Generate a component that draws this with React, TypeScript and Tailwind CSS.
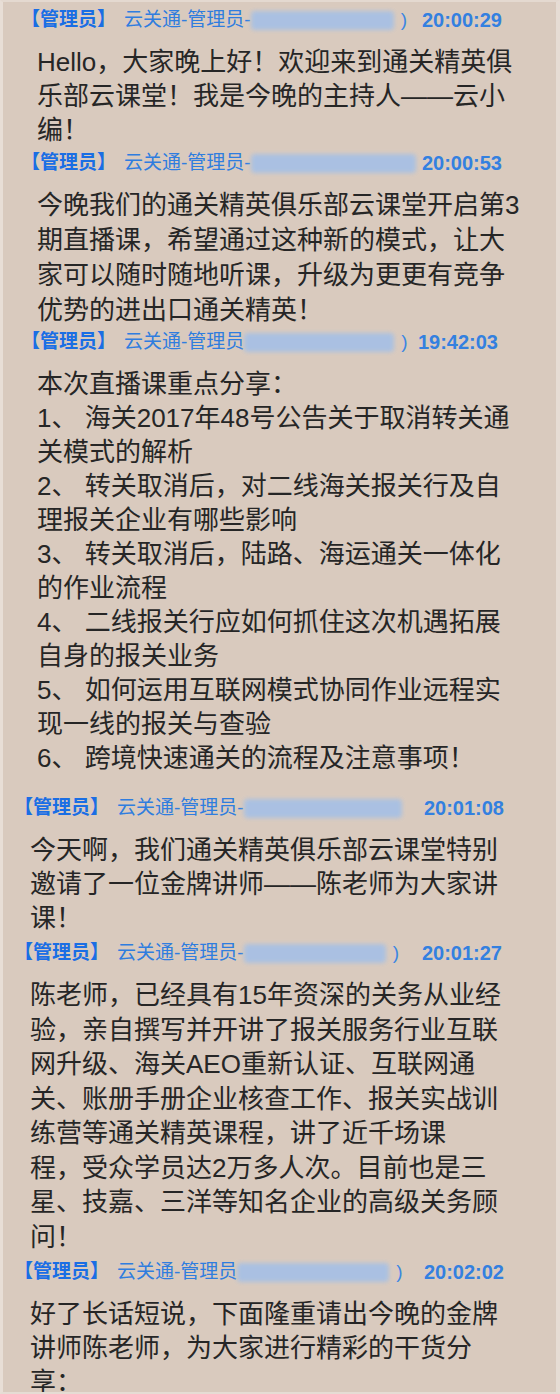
import type { ReactNode } from 'react'

type Msg = {
  name: string
  blur: number
  paren: boolean
  time: string
  lines: string[]
  indent: 'wide' | 'narrow'
  gapTop: string
  leading: string
  timeEnd: string
}

const messages: Msg[] = [
  {
    name: '云关通-管理员-',
    blur: 143,
    paren: true,
    time: '20:00:29',
    indent: 'wide',
    gapTop: 'mt-0',
    leading: 'leading-[34px]',
    timeEnd: 'pr-[54px]',
    lines: ['Hello，大家晚上好！欢迎来到通关精英俱', '乐部云课堂！我是今晚的主持人——云小', '编！'],
  },
  {
    name: '云关通-管理员-',
    blur: 165,
    paren: false,
    time: '20:00:53',
    indent: 'wide',
    gapTop: 'mt-[2px]',
    leading: 'leading-[35px]',
    timeEnd: 'pr-[54px]',
    lines: [
      '今晚我们的通关精英俱乐部云课堂开启第3',
      '期直播课，希望通过这种新的模式，让大',
      '家可以随时随地听课，升级为更更有竞争',
      '优势的进出口通关精英！',
    ],
  },
  {
    name: '云关通-管理员',
    blur: 150,
    paren: true,
    time: '19:42:03',
    indent: 'wide',
    gapTop: 'mt-0',
    leading: 'leading-[34px]',
    timeEnd: 'pr-[58px]',
    lines: [
      '本次直播课重点分享：',
      '1、 海关2017年48号公告关于取消转关通',
      '关模式的解析',
      '2、 转关取消后，对二线海关报关行及自',
      '理报关企业有哪些影响',
      '3、 转关取消后，陆路、海运通关一体化',
      '的作业流程',
      '4、 二线报关行应如何抓住这次机遇拓展',
      '自身的报关业务',
      '5、 如何运用互联网模式协同作业远程实',
      '现一线的报关与查验',
      '6、 跨境快速通关的流程及注意事项！',
    ],
  },
  {
    name: '云关通-管理员-',
    blur: 158,
    paren: false,
    time: '20:01:08',
    indent: 'narrow',
    gapTop: 'mt-[19px]',
    leading: 'leading-[34px]',
    timeEnd: 'pr-[52px]',
    lines: ['今天啊，我们通关精英俱乐部云课堂特别', '邀请了一位金牌讲师——陈老师为大家讲', '课！'],
  },
  {
    name: '云关通-管理员-',
    blur: 142,
    paren: true,
    time: '20:01:27',
    indent: 'narrow',
    gapTop: 'mt-[4px]',
    leading: 'leading-[34.5px]',
    timeEnd: 'pr-[54px]',
    lines: [
      '陈老师，已经具有15年资深的关务从业经',
      '验，亲自撰写并开讲了报关服务行业互联',
      '网升级、海关AEO重新认证、互联网通',
      '关、账册手册企业核查工作、报关实战训',
      '练营等通关精英课程，讲了近千场课',
      '程，受众学员达2万多人次。目前也是三',
      '星、技嘉、三洋等知名企业的高级关务顾',
      '问！',
    ],
  },
  {
    name: '云关通-管理员',
    blur: 152,
    paren: true,
    time: '20:02:02',
    indent: 'narrow',
    gapTop: 'mt-[4px]',
    leading: 'leading-[34px]',
    timeEnd: 'pr-[52px]',
    lines: ['好了长话短说，下面隆重请出今晚的金牌', '讲师陈老师，为大家进行精彩的干货分', '享：'],
  },
]

function Header({ msg }: { msg: Msg }) {
  return (
    <div
      className={`flex h-[28px] items-center whitespace-nowrap text-[19px] leading-[28px] ${
        msg.indent === 'wide' ? 'pl-[18px]' : 'pl-[11px]'
      } ${msg.timeEnd}`}
    >
      <span className="font-bold text-[#1a6ee4]">【管理员】</span>
      <span className="ml-[8px] text-[#2f7ddf]">{msg.name}</span>
      <span
        className="inline-block h-[19px] rounded-sm bg-[#a5c0e6] opacity-90 blur-[2px]"
        style={{ width: msg.blur }}
      />
      {msg.paren && <span className="ml-[7px] text-[#3c86e2]">)</span>}
      <span className="flex-1" />
      <span className="text-[20px] font-bold text-[#3380e0] [font-family:'Liberation_Sans',sans-serif]">
        {msg.time}
      </span>
    </div>
  )
}

function Body({ msg }: { msg: Msg }): ReactNode {
  return (
    <div
      className={`mt-[11px] text-[26px] text-[#262626] ${msg.leading} ${
        msg.indent === 'wide' ? 'pl-[34px]' : 'pl-[27px]'
      }`}
    >
      {msg.lines.map((line, i) => (
        <div key={i} className="whitespace-pre">
          {line}
        </div>
      ))}
    </div>
  )
}

export default function App() {
  return (
    <div
      className="h-[1394px] w-[560px] overflow-hidden border-l-[3px] border-t-[2px] border-r-[4px] border-b-[2px] border-l-[#e8ded6] border-t-[#e4d9d0] border-r-[#e6dcd4] border-b-[#e6dcd4] bg-[#d9cabe] pt-[4px]"
      style={{ fontFamily: "'Liberation Sans', 'Noto Sans CJK SC', sans-serif" }}
    >
      {messages.map((msg, i) => (
        <div key={i} className={msg.gapTop}>
          <Header msg={msg} />
          <Body msg={msg} />
        </div>
      ))}
    </div>
  )
}
